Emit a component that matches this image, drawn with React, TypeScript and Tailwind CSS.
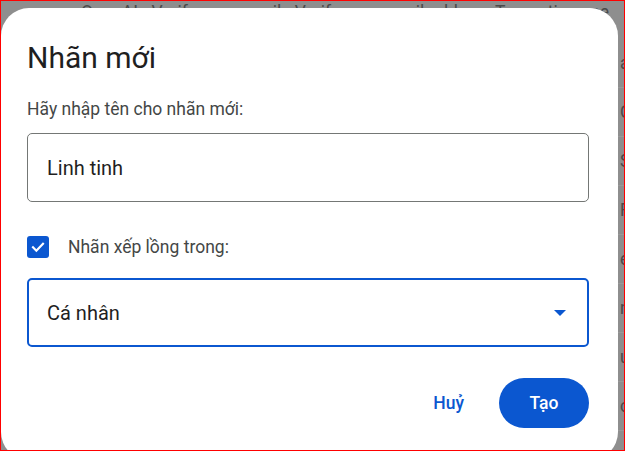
import React from 'react';

const bgRows = ['ay', 'C', 'S', 'F', 'e', 'n', 'u', 'c'];

export default function App() {
  return (
    <div
      className="relative w-[625px] h-[451px] overflow-hidden border border-[#ff0000] bg-[#8e8e8e]"
      style={{ fontFamily: 'Roboto, "Noto Sans", sans-serif' }}
    >
      {/* trang phía sau lớp phủ */}
      <div className="absolute left-[80px] top-[-1px] whitespace-nowrap text-[17.5px] leading-[24px] text-[#4a4a4a]">
        OpenAI - Verify your email - Verify your email address To continue se
      </div>
      <div className="absolute left-[617px] top-[38px] flex flex-col">
        {bgRows.map((t, i) => (
          <div
            key={i}
            className="h-[49px] flex items-center border-b border-[#999999] pl-[2px] text-[17.5px] text-[#4a4a4a] whitespace-nowrap"
          >
            {t}
          </div>
        ))}
      </div>

      {/* hộp thoại */}
      <div className="absolute left-0 top-[7px] w-[617px] h-[452px] rounded-[28px] bg-white pl-[26px] pr-[29px] pt-[32px]">
        <h2 className="text-[30px] leading-[36px] text-[#1f1f1f] font-normal">Nhãn mới</h2>

        <label className="block mt-[21px] text-[17.5px] leading-[24px] text-[#444746]">
          Hãy nhập tên cho nhãn mới:
        </label>
        <div className="mt-[12px] h-[69px] w-[562px] rounded-[5px] border border-[#747775] flex items-center pl-[19px] text-[20px] text-[#1f1f1f]">
          Linh tinh
        </div>

        <div className="mt-[34px] flex items-center h-[22px]">
          <span className="w-[22px] h-[22px] rounded-[3px] bg-[#0b57d0] flex items-center justify-center">
            <svg width="16" height="16" viewBox="0 0 24 24" fill="none">
              <path d="M4.5 12.5l5 5L19.5 7" stroke="white" strokeWidth="3.2" strokeLinecap="square" />
            </svg>
          </span>
          <span className="ml-[19px] text-[17.5px] leading-[24px] text-[#444746]">Nhãn xếp lồng trong:</span>
        </div>

        <div className="mt-[20px] h-[69px] w-[562px] rounded-[5px] border-[2.5px] border-[#0b57d0] flex items-center pl-[18px] pr-[21px] text-[20px] text-[#1f1f1f]">
          <span className="flex-1">Cá nhân</span>
          <svg width="12" height="6" viewBox="0 0 12 6">
            <path d="M0 0h12L6 6z" fill="#0b57d0" />
          </svg>
        </div>

        <div className="mt-[31px] w-[562px] flex justify-end items-center">
          <button className="h-[50px] px-[15px] mr-[20px] rounded-full text-[17.5px] font-medium text-[#0b57d0]">
            Huỷ
          </button>
          <button className="h-[50px] w-[90px] rounded-full bg-[#0b57d0] text-[17.5px] font-medium text-white">
            Tạo
          </button>
        </div>
      </div>
    </div>
  );
}
